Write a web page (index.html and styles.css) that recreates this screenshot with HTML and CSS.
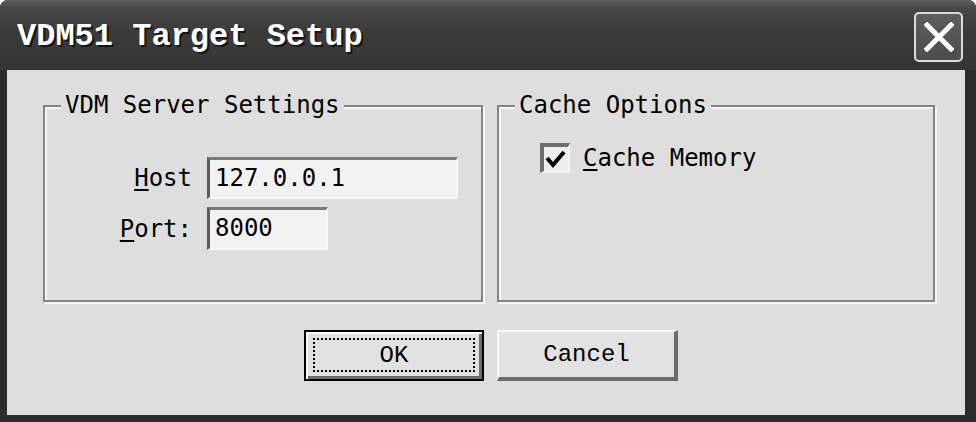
FILE: index.html
```html
<!DOCTYPE html>
<html>
<head>
<meta charset="utf-8">
<title>VDM51 Target Setup</title>
<link rel="stylesheet" href="styles.css">
</head>
<body>
<div class="window">
  <div class="titlebar">
    <div class="title">VDM51 Target Setup</div>
    <div class="close">
      <svg width="30" height="30" viewBox="0 0 30 30"><path d="M3 3 L27 27 M27 3 L3 27" stroke="#fff" stroke-width="5" stroke-linecap="square"/></svg>
    </div>
  </div>
  <div class="client">
    <div class="groups">
      <div class="group group-server">
        <span class="legend">VDM Server Settings</span>
        <div class="form">
          <label class="lbl"><u>H</u>ost</label>
          <div class="input input-host">127.0.0.1</div>
          <label class="lbl"><u>P</u>ort:</label>
          <div class="input input-port">8000</div>
        </div>
      </div>
      <div class="group group-cache">
        <span class="legend">Cache Options</span>
        <div class="check-row">
          <div class="checkbox">
            <svg width="24" height="24" viewBox="0 0 24 24"><polyline points="3,11 9,18 20,5" fill="none" stroke="#000" stroke-width="4"/></svg>
          </div>
          <span class="check-label"><u>C</u>ache Memory</span>
        </div>
      </div>
    </div>
    <div class="buttons">
      <div class="btn btn-default"><span class="focus">OK</span></div>
      <div class="btn">Cancel</div>
    </div>
  </div>
</div>
</body>
</html>
```
FILE: styles.css
```css
html, body {
  margin: 0;
  padding: 0;
  background: #ffffff;
}
.window {
  width: 976px;
  height: 422px;
  background: #2c2c2c;
  border-radius: 8px 8px 0 0;
  overflow: hidden;
}
.titlebar {
  height: 70px;
  box-sizing: border-box;
  padding: 4px 13px 0 17px;
  display: flex;
  align-items: center;
  justify-content: space-between;
  background: linear-gradient(#606060 0px, #474747 8px, #3b3b3b 30px, #353535 70px);
}
.title {
  font-family: "Liberation Mono", monospace;
  font-weight: bold;
  font-size: 32px;
  line-height: 1;
  color: #ffffff;
  text-shadow: 2px 2px 0 #151515;
}
.close {
  width: 49px;
  height: 50px;
  box-sizing: border-box;
  border: 2px solid #dcdcdc;
  border-radius: 5px;
  background: linear-gradient(#5e5e5e, #4c4c4c);
  display: flex;
  align-items: center;
  justify-content: center;
}
.client {
  margin: 0 11px 0 7px;
  height: 345px;
  box-sizing: border-box;
  background: #dedede;
  padding-top: 35px;
  font-family: "DejaVu Sans Mono", monospace;
  font-size: 24px;
  color: #000;
}
.groups {
  display: flex;
  gap: 14px;
  padding-left: 36px;
}
.group {
  position: relative;
  height: 197px;
  box-sizing: border-box;
  border: 2px solid #848484;
  box-shadow: inset 2px 2px 0 #f7f7f7, 2px 2px 0 #f7f7f7;
}
.group-server {
  width: 440px;
  padding-top: 50px;
}
.group-cache {
  width: 438px;
  padding: 36px 0 0 41px;
}
.legend {
  position: absolute;
  top: -14px;
  left: 16px;
  padding: 0 4px;
  line-height: 24px;
  background: #dedede;
  white-space: pre;
}
.form {
  display: grid;
  grid-template-columns: 147px auto;
  column-gap: 15px;
  row-gap: 8px;
  align-items: center;
}
.lbl {
  text-align: right;
  line-height: 24px;
}
u {
  text-decoration-thickness: 2px;
  text-underline-offset: 3px;
}
.input {
  box-sizing: border-box;
  border-style: solid;
  border-width: 3px 2px 2px 3px;
  border-color: #7a7a7a #f8f8f8 #f8f8f8 #5c5c5c;
  background: #f2f2f2;
  padding-left: 5px;
  line-height: 36px;
  white-space: pre;
}
.input-host {
  width: 251px;
  height: 42px;
}
.input-port {
  width: 121px;
  height: 43px;
}
.check-row {
  display: flex;
  align-items: center;
  gap: 13px;
}
.checkbox {
  width: 30px;
  height: 30px;
  box-sizing: border-box;
  border-style: solid;
  border-width: 4px 2px 2px 4px;
  border-color: #6e6e6e #f4f4f4 #f4f4f4 #6e6e6e;
  background: #efefef;
  display: flex;
  align-items: center;
  justify-content: center;
}
.check-label {
  line-height: 24px;
}
.buttons {
  display: flex;
  justify-content: center;
  gap: 13px;
  margin-top: 28px;
  padding-left: 10px;
}
.btn {
  width: 181px;
  height: 51px;
  box-sizing: border-box;
  border-style: solid;
  border-width: 2px 4px 4px 2px;
  border-color: #fbfbfb #6c6c6c #6c6c6c #fbfbfb;
  background: #e2e2e2;
  display: flex;
  align-items: center;
  justify-content: center;
  font-family: "Liberation Mono", monospace;
  font-size: 24px;
}
.btn-default {
  width: 180px;
  border: 2px solid #000;
  box-shadow: inset 2px 2px 0 #fbfbfb, inset -3px -3px 0 #6c6c6c;
  padding: 6px 7px 7px 7px;
}
.focus {
  flex: 1;
  align-self: stretch;
  border: 2px dotted #000;
  display: flex;
  align-items: center;
  justify-content: center;
}
```
